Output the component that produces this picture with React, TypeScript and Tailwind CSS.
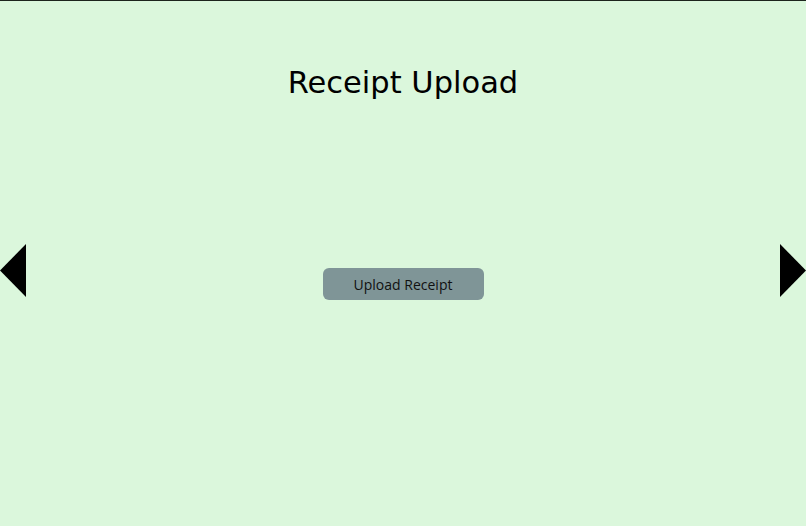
export default function App() {
  return (
    <div className="h-[526px] w-full flex flex-col bg-[#dbf7dc] border-t border-[#1c241c]" style={{ fontFamily: '"DejaVu Sans", sans-serif' }}>
      <h1 className="mt-[63px] text-center text-[30.5px] leading-[38px] text-black">Receipt Upload</h1>

      <div className="mt-[138px] flex items-center justify-between">
        {/* prev */}
        <button className="w-[26px] h-[53px]" aria-label="previous">
          <svg width="26" height="53" viewBox="0 0 26 53">
            <polygon points="26,0 0,26.5 26,53" fill="#000" />
          </svg>
        </button>

        <button
          className="w-[161px] h-[32px] rounded-[6px] bg-[#7f9597] text-[14px] text-[#111] mt-[28px]"
          style={{ fontFamily: '"Open Sans", sans-serif' }}
        >
          Upload Receipt
        </button>

        {/* next */}
        <button className="w-[26px] h-[53px]" aria-label="next">
          <svg width="26" height="53" viewBox="0 0 26 53">
            <polygon points="0,0 26,26.5 0,53" fill="#000" />
          </svg>
        </button>
      </div>
    </div>
  );
}
